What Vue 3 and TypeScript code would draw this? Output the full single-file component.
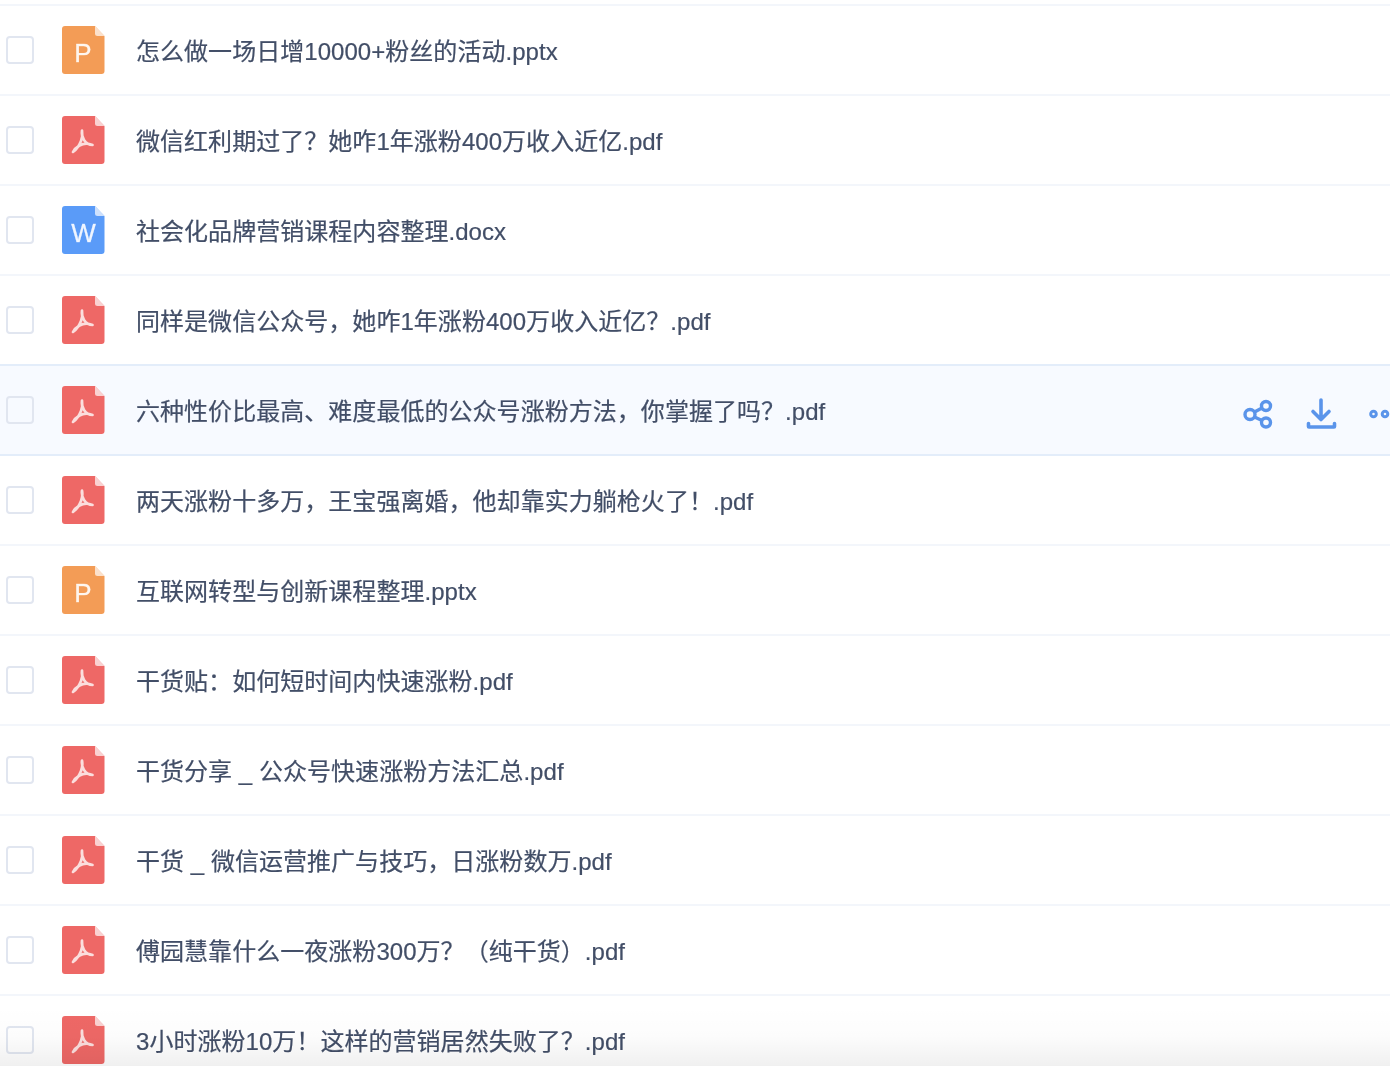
<script setup lang="ts">
type Kind = 'p' | 'a' | 'w'
interface Row { name: string; kind: Kind; active?: boolean }
const rows: Row[] = [
  { name: '怎么做一场日增10000+粉丝的活动.pptx', kind: 'p' },
  { name: '微信红利期过了？她咋1年涨粉400万收入近亿.pdf', kind: 'a' },
  { name: '社会化品牌营销课程内容整理.docx', kind: 'w' },
  { name: '同样是微信公众号，她咋1年涨粉400万收入近亿？.pdf', kind: 'a' },
  { name: '六种性价比最高、难度最低的公众号涨粉方法，你掌握了吗？.pdf', kind: 'a', active: true },
  { name: '两天涨粉十多万，王宝强离婚，他却靠实力躺枪火了！.pdf', kind: 'a' },
  { name: '互联网转型与创新课程整理.pptx', kind: 'p' },
  { name: '干货贴：如何短时间内快速涨粉.pdf', kind: 'a' },
  { name: '干货分享 _ 公众号快速涨粉方法汇总.pdf', kind: 'a' },
  { name: '干货 _ 微信运营推广与技巧，日涨粉数万.pdf', kind: 'a' },
  { name: '傅园慧靠什么一夜涨粉300万？（纯干货）.pdf', kind: 'a' },
  { name: '3小时涨粉10万！这样的营销居然失败了？.pdf', kind: 'a' },
]
const colors: Record<Kind, string> = { p: '#f39c56', a: '#ee6866', w: '#5a9bf8' }
</script>

<template>
  <div class="page">
    <div v-for="r in rows" :key="r.name" class="row" :class="{ active: r.active }">
      <span class="check"></span>
      <svg class="file" width="43" height="48" viewBox="0 0 43 48">
        <path d="M3 0H33L42.500 10V45a3 3 0 0 1-3 3H3a3 3 0 0 1-3-3V3a3 3 0 0 1 3-3Z" :fill="colors[r.kind]" />
        <path d="M33 0L42.500 10H35.500a2.500 2.500 0 0 1-2.500-2.500Z" fill="#ffffff" fill-opacity="0.7" />
        <path
          v-if="r.kind === 'a'"
          d="M20 14.500C19.500 18 20 21 22 24C24 27 27 29 30.500 29C26 27 21 27.500 17.500 29.500C15 31 12 34 11 36C14 34 17 30 19 25C20.500 21 20.500 17 20 14.500Z"
          fill="none"
          stroke="#fff"
          stroke-opacity="0.78"
          stroke-width="2.700"
          stroke-linecap="round"
          stroke-linejoin="round"
        />
        <text v-else class="glyph" :x="r.kind === 'p' ? 21 : 21.500" y="36" text-anchor="middle">{{ r.kind === 'p' ? 'P' : 'W' }}</text>
      </svg>
      <span class="name">{{ r.name }}</span>
      <div v-if="r.active" class="actions">
        <svg width="30" height="30" viewBox="0 0 30 30" fill="none" stroke="#5a94ea" stroke-width="3.400">
          <circle cx="7" cy="15.500" r="5" />
          <circle cx="23" cy="7" r="4.500" />
          <circle cx="23" cy="23.500" r="4.500" />
          <path d="M11.500 13L19 9M11.500 18L19 21.500" />
        </svg>
        <svg width="32" height="32" viewBox="0 0 32 32" fill="none" stroke="#5a94ea" stroke-width="3.600" stroke-linecap="round" stroke-linejoin="round">
          <path d="M16 2V21M8 13.500L16 21.500L24 13.500" />
          <path d="M3.500 25.500V28.500a.5.5 0 0 0 .5.5H29a.5.5 0 0 0 .5-.5V25.500" />
        </svg>
        <svg width="21" height="10" viewBox="0 0 21 10" fill="none" stroke="#5a94ea" stroke-width="3">
          <circle cx="4.500" cy="5" r="2.800" />
          <circle cx="16" cy="5" r="2.800" />
        </svg>
      </div>
    </div>
    <div class="fade"></div>
  </div>
</template>

<style scoped>
.page {
  position: relative;
  width: 1390px;
  height: 1066px;
  overflow: hidden;
  padding-top: 5px;
  box-sizing: border-box;
  background: #fff;
  font-family: "Liberation Sans", "Noto Sans CJK SC", sans-serif;
}
.page::before {
  content: "";
  display: block;
  height: 2px;
  margin-top: -1px;
  background: #f3f6fb;
}
.row {
  display: flex;
  align-items: center;
  height: 88px;
  border-bottom: 2px solid #f3f6fb;
  padding-left: 6px;
}
.row.active {
  background: #f7faff;
  border-bottom-color: #e3edfa;
  box-shadow: 0 -2px 0 #e3edfa;
}
.check {
  box-sizing: border-box;
  width: 28px;
  height: 28px;
  border: 2px solid #e1e6f0;
  border-radius: 4px;
  background: #fff;
  flex: none;
  filter: blur(0.3px);
}
.row.active .check { background: transparent; }
.file {
  flex: none;
  margin-left: 28px;
  filter: blur(0.6px);
}
.glyph {
  font-family: "Liberation Sans", sans-serif;
  font-size: 26px;
  fill: #fff;
  fill-opacity: 0.9;
  stroke: #fff;
  stroke-opacity: 0.6;
  stroke-width: 0.4px;
}
.name {
  margin-left: 31px;
  padding-top: 4px;
  font-size: 24px;
  line-height: 32px;
  letter-spacing: 0.04px;
  color: #424e67;
  white-space: nowrap;
  -webkit-text-stroke: 0.2px #424e67;
  filter: blur(0.4px);
}
.actions {
  margin-left: auto;
  display: flex;
  align-items: center;
  gap: 32px;
  padding-top: 8px;
  filter: blur(0.4px);
}
.fade {
  position: absolute;
  left: 0;
  right: 0;
  bottom: 0;
  height: 60px;
  background: linear-gradient(to bottom, rgba(0,0,0,0), rgba(0,0,0,0.012) 50%, rgba(0,0,0,0.06));
  pointer-events: none;
}
</style>
